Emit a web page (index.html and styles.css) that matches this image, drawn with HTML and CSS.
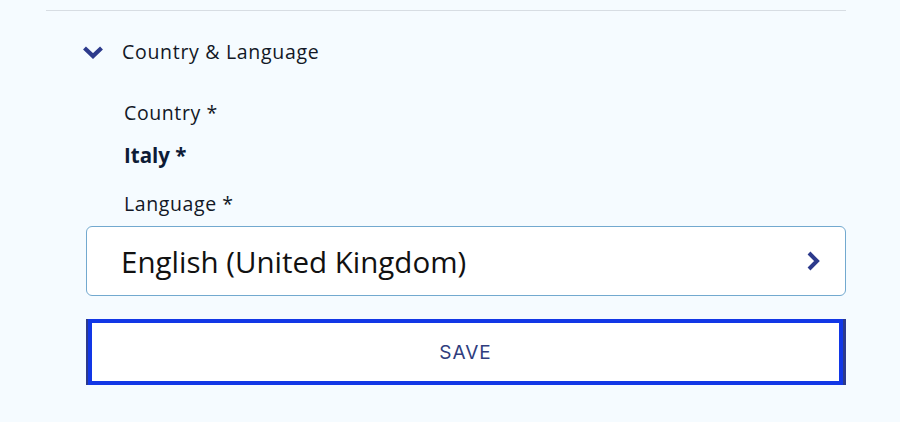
FILE: index.html
```html
<!DOCTYPE html>
<html lang="en">
<head>
<meta charset="utf-8">
<link rel="stylesheet" href="styles.css">
</head>
<body>
<div class="page">
  <div class="section">
    <div class="header">
      <svg class="chev-down" width="22" height="14" viewBox="0 0 22 14"><path d="M2.5 3 L11 11 L19.5 3" fill="none" stroke="#2c3a8c" stroke-width="4.2" stroke-linejoin="miter" stroke-linecap="butt"/></svg>
      <span class="title">Country &amp; Language</span>
    </div>
    <div class="fields">
      <div class="label">Country *</div>
      <div class="value">Italy *</div>
      <div class="label lang">Language *</div>
    </div>
    <div class="select">
      <span class="select-text">English (United Kingdom)</span>
      <svg class="chev-right" width="14" height="20" viewBox="0 0 14 20"><path d="M3 2 L11 10 L3 18" fill="none" stroke="#2c3a8c" stroke-width="4" stroke-linejoin="miter"/></svg>
    </div>
    <button class="save">SAVE</button>
  </div>
</div>
</body>
</html>
```
FILE: styles.css
```css
html, body {
  margin: 0;
  padding: 0;
  background: #f5fbff;
}
.page {
  width: 900px;
  height: 422px;
  padding: 10px 54px 0 46px;
  box-sizing: border-box;
}
.section {
  border-top: 1px solid #d7dde3;
  display: flex;
  flex-direction: column;
}
.header {
  display: flex;
  align-items: center;
  height: 40px;
  margin-top: 20px;
  padding-left: 36px;
}
.chev-down {
  margin-right: 18px;
  margin-top: 2px;
}
.title {
  font-family: "Open Sans", sans-serif;
  font-size: 19.5px;
  letter-spacing: 0.7px;
  color: #121826;
}
.fields {
  padding-left: 78px;
  font-family: "Open Sans", sans-serif;
  color: #121826;
  margin-top: 30px;
}
.label {
  font-size: 19.5px;
  letter-spacing: 0.6px;
  line-height: 24px;
}
.value {
  font-size: 20.5px;
  font-weight: 700;
  color: #0d1b36;
  line-height: 26px;
  margin-top: 17px;
}
.label.lang {
  margin-top: 24px;
}
.select {
  margin-left: 40px;
  margin-top: 10px;
  height: 70px;
  box-sizing: border-box;
  border: 1px solid #72a9cf;
  border-radius: 6px;
  background: #fff;
  display: flex;
  align-items: center;
  justify-content: space-between;
  padding: 0 25px 0 34px;
}
.select-text {
  font-family: "Open Sans", sans-serif;
  font-size: 29.5px;
  color: #111;
}
.save {
  margin-left: 40px;
  margin-top: 23px;
  height: 66px;
  background: #fff;
  border: none;
  border-left: 2px solid #2c3a8c;
  border-right: 3px solid #2c3a8c;
  box-shadow: inset 0 0 0 4px #1237e6;
  font-family: "Inter", sans-serif;
  font-size: 19px;
  color: #2f3d7e;
  letter-spacing: 1px;
  padding: 0;
}
```
